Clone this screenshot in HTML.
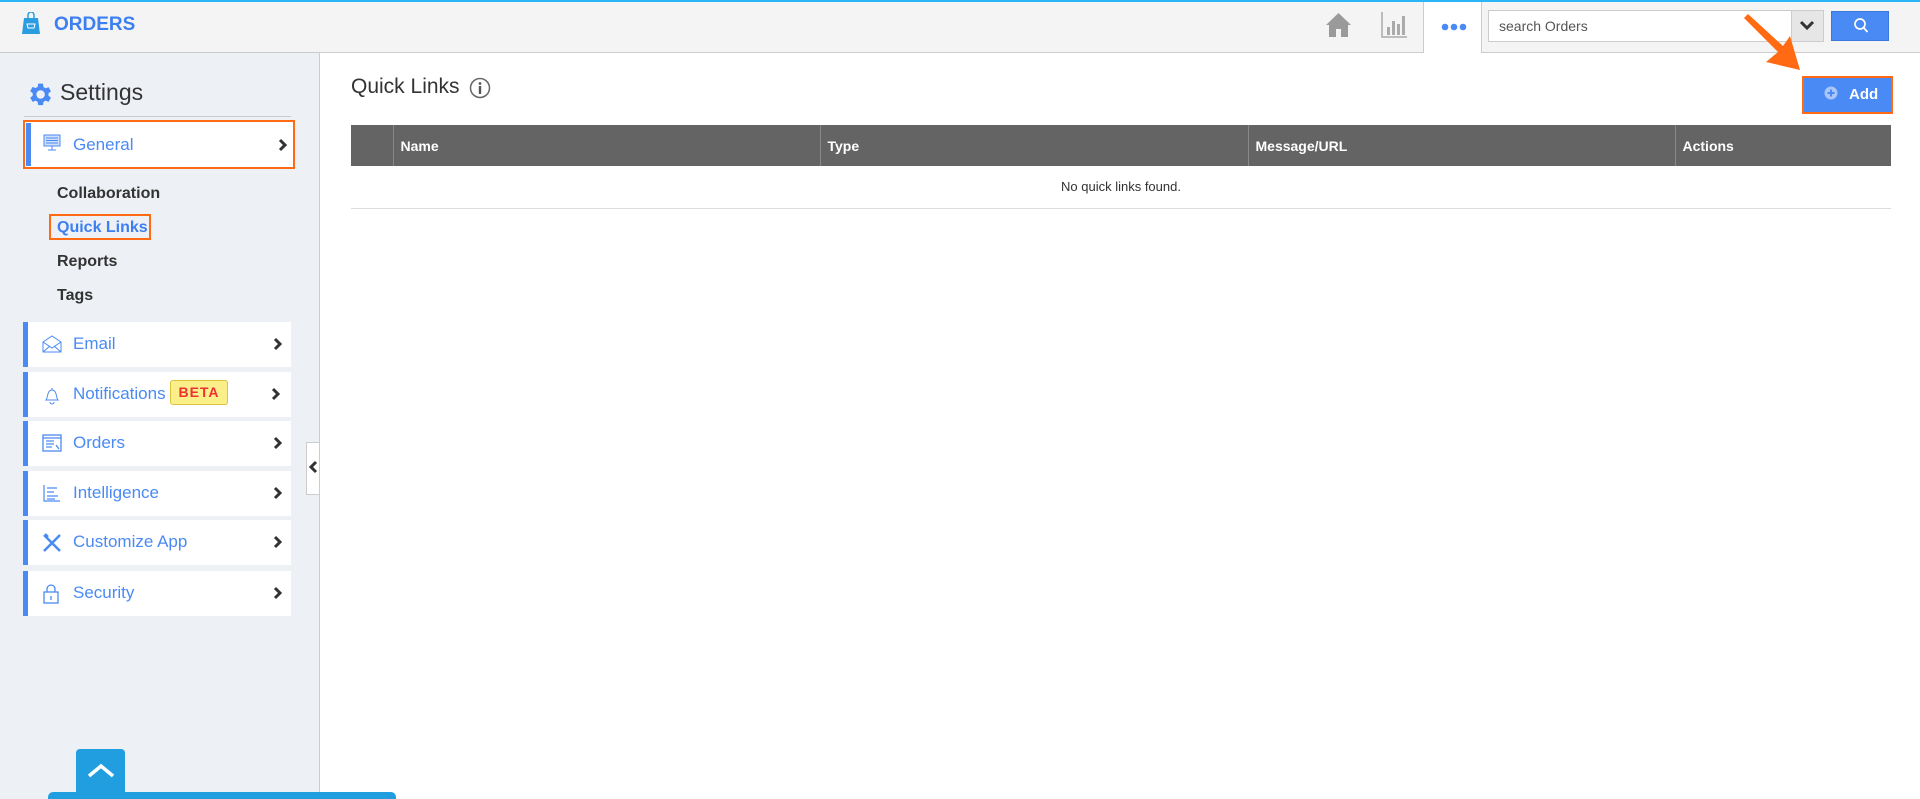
<!DOCTYPE html>
<html style="width:1920px;height:799px;overflow:hidden"><head><meta charset="utf-8"><style>
*{box-sizing:border-box;margin:0;padding:0}
body{width:1920px;height:799px;overflow:hidden;background:#fff;font-family:"Liberation Sans",Arial,sans-serif;position:relative}
.abs{position:absolute}
#top{left:0;top:0;width:1920px;height:53px;background:#f4f4f4;border-top:2px solid #29b6f6;border-bottom:1px solid #ccc}
#side{left:0;top:53px;width:320px;height:746px;background:#edf0f5;border-right:1px solid #ccc;overflow:hidden}
.item{position:absolute;left:23px;width:268px;height:45px;background:#fff;border-left:5px solid #4a8af4}
.item .t{position:absolute;left:45px;top:12px;font-size:17px;color:#4a8af4}
.item svg.i{position:absolute;left:14px;top:13px}
.chev{position:absolute;right:8px;top:15px}
.sub{position:absolute;left:57px;font-size:16px;font-weight:bold;color:#333}
th{background:#646464;color:#fff;font-size:14px;font-weight:bold;text-align:left;padding-left:7px;height:41px;border-right:1px solid #888}
</style></head><body>
<div id="top" class="abs">
 <svg class="abs" style="left:22px;top:10px" width="18" height="22" viewBox="0 0 18 22"><path d="M2 6h14l2 16H0z" fill="#2a9de0"/><path d="M6 7V3a3 3 0 0 1 6 0v4" stroke="#2a9de0" stroke-width="1.5" fill="none"/><path d="M5 12h8l-1 4H6z" stroke="#fff" stroke-width="1" fill="none"/></svg>
 <div class="abs" style="left:54px;top:12px;font-size:19px;font-weight:bold;color:#3d7ff0">ORDERS</div>
 <svg class="abs" style="left:1325px;top:10px" width="27" height="26" viewBox="0 0 27 26"><path d="M13.5 1L1 13h3v12h7v-8h5v8h7V13h3z" fill="#9a9a9a"/></svg>
 <svg class="abs" style="left:1381px;top:10px" width="26" height="26" viewBox="0 0 26 26"><path d="M1 0v25h25" stroke="#aaa" stroke-width="1.5" fill="none"/><rect x="6" y="15" width="3" height="8" fill="#aaa"/><rect x="11" y="9" width="3" height="14" fill="#aaa"/><rect x="16" y="12" width="3" height="11" fill="#aaa"/><rect x="21" y="4" width="3" height="19" fill="#aaa"/></svg>
 <div class="abs" style="left:1423px;top:0;width:59px;height:51px;background:#fff;border-left:1px solid #ccc;border-right:1px solid #ccc"></div>
 <svg class="abs" style="left:1441px;top:21px" width="26" height="8"><circle cx="4" cy="4" r="3.3" fill="#4a8af4"/><circle cx="13" cy="4" r="3.3" fill="#4a8af4"/><circle cx="22" cy="4" r="3.3" fill="#4a8af4"/></svg>
 <div class="abs" style="left:1488px;top:8px;width:336px;height:32px;background:#fff;border:1px solid #ccc"></div>
 <div class="abs" style="left:1499px;top:16px;font-size:14px;color:#555">search Orders</div>
 <div class="abs" style="left:1791px;top:8px;width:33px;height:32px;background:#e6e6e6;border:1px solid #ccc"></div>
 <svg class="abs" style="left:1799px;top:18px" width="16" height="12"><path d="M2 2l6 6 6-6" stroke="#333" stroke-width="3" fill="none"/></svg>
 <div class="abs" style="left:1831px;top:9px;width:58px;height:30px;background:#4a8af4;border:1px solid #3a78e0"></div>
 <svg class="abs" style="left:1853px;top:15px" width="16" height="17"><circle cx="7" cy="7" r="5" stroke="#fff" stroke-width="1.7" fill="none"/><path d="M10.5 10.5l4 4.5" stroke="#fff" stroke-width="1.7"/></svg>
</div>
<div id="side" class="abs">
 <svg class="abs" style="left:25px;top:27px" width="29" height="29" viewBox="0 0 24 24"><path fill="#4a8af4" d="M19.4 13a7.5 7.5 0 0 0 0-2l2.1-1.6-2-3.5-2.5 1a7.3 7.3 0 0 0-1.7-1L14.9 3h-4l-.4 2.7a7.3 7.3 0 0 0-1.7 1l-2.5-1-2 3.5L6.4 11a7.5 7.5 0 0 0 0 2l-2.1 1.6 2 3.5 2.5-1a7.3 7.3 0 0 0 1.7 1l.4 2.7h4l.4-2.7a7.3 7.3 0 0 0 1.7-1l2.5 1 2-3.5zM12.9 15.5a3.5 3.5 0 1 1 0-7 3.5 3.5 0 0 1 0 7z"/></svg>
 <div class="abs" style="left:60px;top:26px;font-size:23px;color:#333">Settings</div>
 <div class="abs" style="left:24px;top:63px;width:267px;height:1px;background:#ccc"></div>
 <div class="abs" style="left:23px;top:67px;width:272px;height:49px;border:2px solid #ff6a13;background:#fff">
  <div class="abs" style="left:1px;top:1px;width:5px;height:43px;background:#4a8af4"></div>
  <svg class="abs" style="left:18px;top:12px" width="18" height="18" viewBox="0 0 18 18"><rect x="1" y="1" width="16" height="11" fill="#cfe0fb" stroke="#4a8af4"/><path d="M3 4h12M3 6.5h12M3 9h12M9 12v4M5 16h8" stroke="#4a8af4"/></svg>
  <div class="abs" style="left:48px;top:13px;font-size:17px;color:#4a8af4">General</div>
  <svg class="abs" style="left:253px;top:16px" width="10" height="14"><path d="M2 2l5 5-5 5" stroke="#333" stroke-width="3" fill="none"/></svg>
 </div>
 <div class="sub" style="top:132px">Collaboration</div>
 <div class="abs" style="left:49px;top:161px;width:102px;height:26px;border:2px solid #ff6a13"></div>
 <div class="sub" style="top:166px;color:#3d7ff0">Quick Links</div>
 <div class="sub" style="top:200px">Reports</div>
 <div class="sub" style="top:234px">Tags</div>

 <div class="item" style="top:269px"><svg class="i" width="20" height="18" viewBox="0 0 20 18"><path d="M1 7l9-6 9 6v10H1z M1 7l9 6 9-6 M1 17l7-6 M19 17l-7-6" stroke="#4a8af4" fill="none"/></svg><div class="t">Email</div><svg class="chev" width="10" height="14"><path d="M2 2l5 5-5 5" stroke="#333" stroke-width="3" fill="none"/></svg></div>
 <div class="item" style="top:319px"><svg class="i" width="20" height="20" viewBox="0 0 20 20"><path d="M4 15c2-2 1-10 6-10s4 8 6 10z M8 17a2 2 0 0 0 4 0 M10 3v2" stroke="#4a8af4" fill="none"/></svg><div class="t">Notifications</div>
  <div class="abs" style="left:142px;top:8px;width:58px;height:25px;background:#fbef8a;border:1px solid #dcc43c;border-radius:3px;color:#ee3030;font-weight:bold;font-size:14px;text-align:center;line-height:23px;letter-spacing:1px">BETA</div>
  <svg class="chev" style="right:10px" width="10" height="14"><path d="M2 2l5 5-5 5" stroke="#333" stroke-width="3" fill="none"/></svg></div>
 <div class="item" style="top:368px"><svg class="i" width="20" height="18" viewBox="0 0 20 18"><rect x="1" y="1" width="18" height="16" fill="none" stroke="#4a8af4" stroke-width="1.3"/><path d="M1 4h18M4 7h8M4 10h8M4 13h6M14 11l3 4" stroke="#4a8af4" stroke-width="1.3"/></svg><div class="t">Orders</div><svg class="chev" width="10" height="14"><path d="M2 2l5 5-5 5" stroke="#333" stroke-width="3" fill="none"/></svg></div>
 <div class="item" style="top:418px"><svg class="i" width="20" height="18" viewBox="0 0 20 18"><path d="M2 1v16h16M5 4h10M5 8h7M5 12h11M5 15h8" stroke="#4a8af4" stroke-width="1.2" fill="none"/></svg><div class="t">Intelligence</div><svg class="chev" width="10" height="14"><path d="M2 2l5 5-5 5" stroke="#333" stroke-width="3" fill="none"/></svg></div>
 <div class="item" style="top:467px"><svg class="i" width="20" height="20" viewBox="0 0 20 20"><path d="M2 2l16 16M18 2L2 18M3 1l3 3M15 5l3-3" stroke="#4a8af4" stroke-width="2.5" fill="none"/></svg><div class="t">Customize App</div><svg class="chev" width="10" height="14"><path d="M2 2l5 5-5 5" stroke="#333" stroke-width="3" fill="none"/></svg></div>
 <div class="item" style="top:518px"><svg class="i" width="18" height="20" viewBox="0 0 18 20"><rect x="2" y="8" width="14" height="11" fill="none" stroke="#4a8af4" stroke-width="1.3"/><path d="M5 8V5a4 4 0 0 1 8 0v3M9 12v4" stroke="#4a8af4" stroke-width="1.3" fill="none"/></svg><div class="t">Security</div><svg class="chev" width="10" height="14"><path d="M2 2l5 5-5 5" stroke="#333" stroke-width="3" fill="none"/></svg></div>

 <div class="abs" style="left:306px;top:389px;width:15px;height:53px;background:#fff;border:1px solid #ccc;border-right:none"></div>
 <svg class="abs" style="left:309px;top:407px" width="10" height="14"><path d="M7 2L2 7l5 5" stroke="#333" stroke-width="3" fill="none"/></svg>
 <div class="abs" style="left:76px;top:696px;width:49px;height:50px;background:#219ee0;border-radius:4px 4px 0 0"></div>
 <svg class="abs" style="left:86px;top:710px" width="30" height="16"><path d="M3 13L15 3l12 10" stroke="#fff" stroke-width="3.5" fill="none"/></svg>
</div>
<div class="abs" style="left:48px;top:792px;width:348px;height:7px;background:#219ee0;border-radius:5px 5px 0 0"></div>

<div class="abs" style="left:351px;top:75px;font-size:21px;color:#333">Quick Links</div>
<svg class="abs" style="left:469px;top:77px" width="22" height="22"><circle cx="11" cy="11" r="9.5" stroke="#666" stroke-width="1.5" fill="none"/><circle cx="11" cy="6.5" r="1.4" fill="#555"/><rect x="9.8" y="9" width="2.4" height="8" fill="#555"/></svg>

<div class="abs" style="left:1802px;top:76px;width:91px;height:38px;border:2px solid #ff6a13;background:#4a8af4"></div>
<svg class="abs" style="left:1824px;top:86px" width="14" height="14"><circle cx="7" cy="7" r="6.5" fill="#a9c6f7"/><path d="M7 3.5v7M3.5 7h7" stroke="#4a8af4" stroke-width="2"/></svg>
<div class="abs" style="left:1849px;top:86px;font-size:15px;font-weight:bold;color:#fff">Add</div>

<svg class="abs" style="left:1735px;top:10px" width="75" height="70" viewBox="1735 10 75 70"><polygon points="1744,18 1748,14 1783,46 1790,36 1800,70 1766,62 1778,52" fill="#ff6a13"/></svg>

<table class="abs" style="left:351px;top:125px;width:1540px;border-collapse:collapse">
<tr><th style="width:42px"></th><th style="width:427px">Name</th><th style="width:428px">Type</th><th style="width:427px">Message/URL</th><th style="border-right:none">Actions</th></tr>
<tr><td colspan="5" style="height:42px;text-align:center;font-size:13px;color:#333;border-bottom:1px solid #ddd">No quick links found.</td></tr>
</table>
</body></html>
